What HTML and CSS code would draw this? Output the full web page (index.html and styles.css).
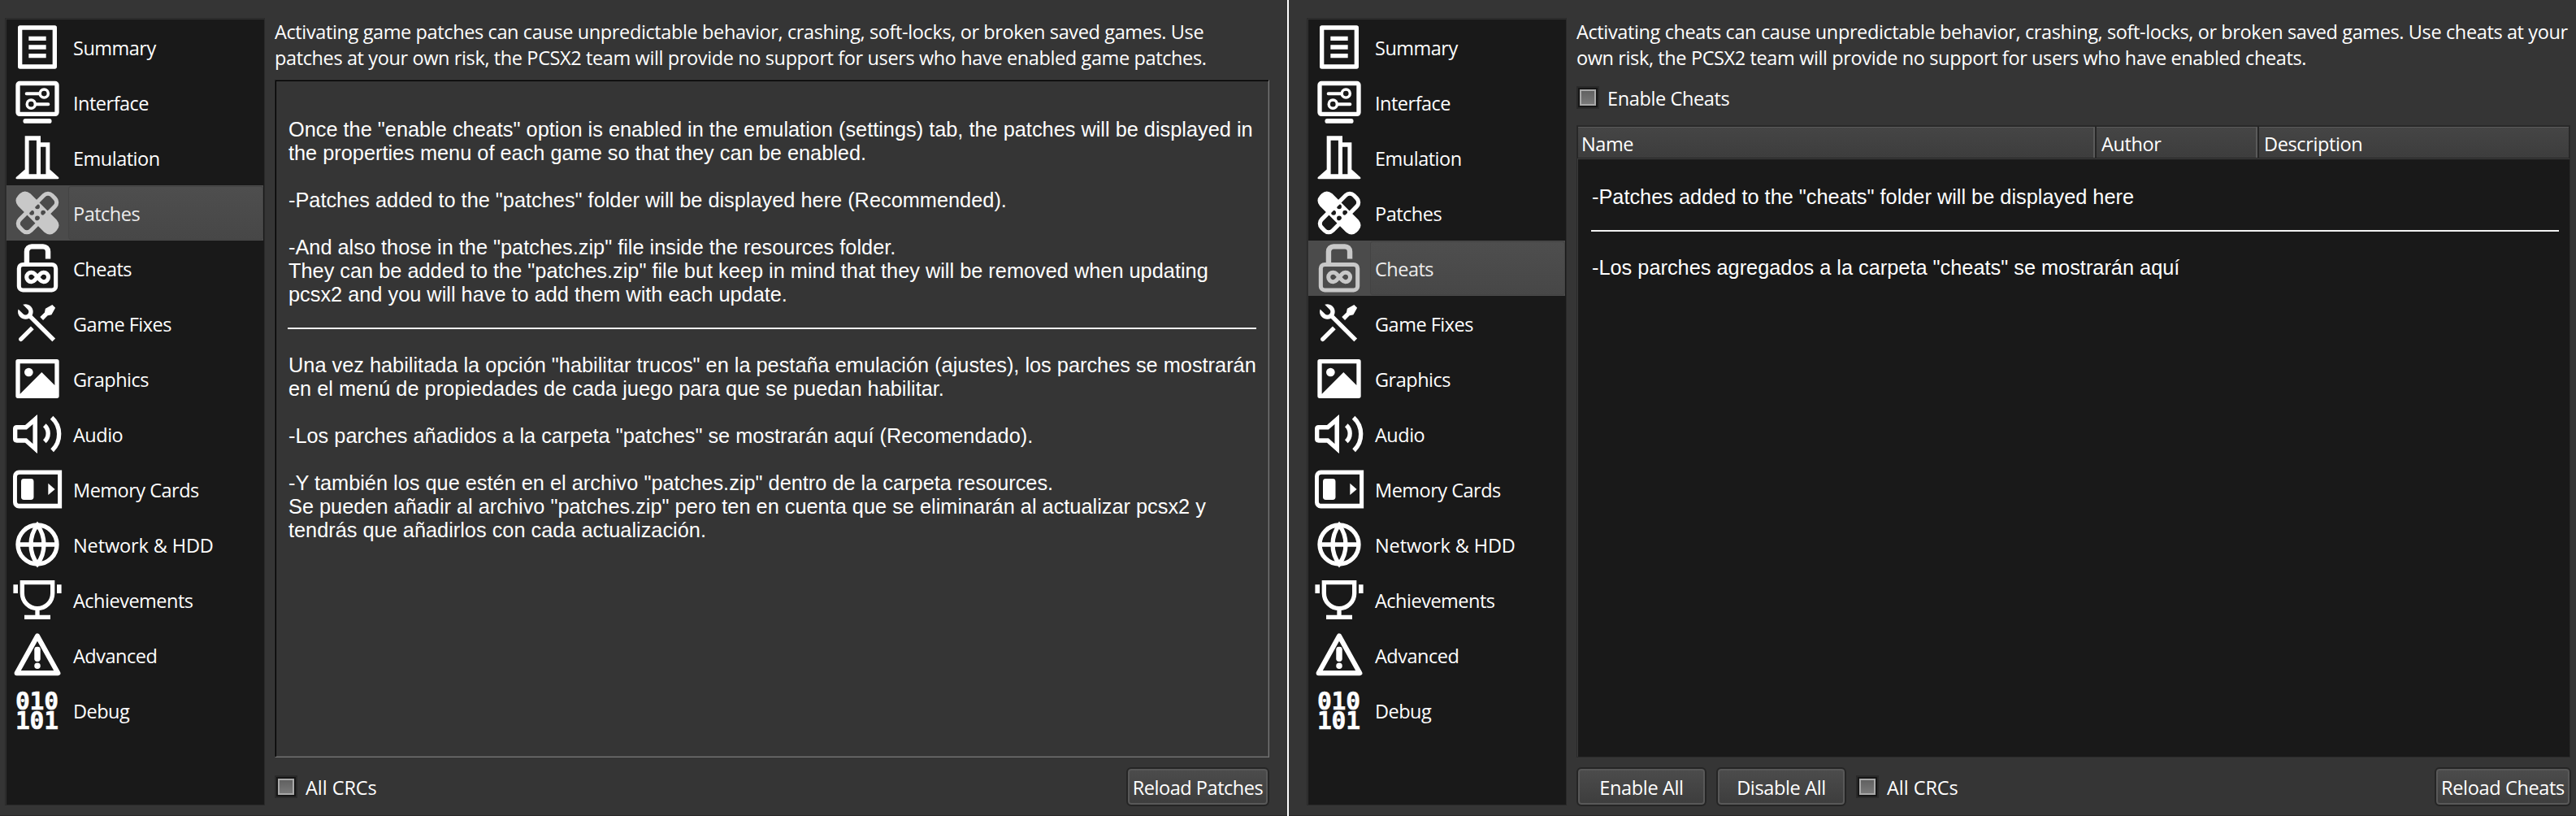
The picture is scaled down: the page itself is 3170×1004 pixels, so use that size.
FILE: index.html
```
<!DOCTYPE html>
<html lang="en">
<head>
<meta charset="utf-8">
<title>PCSX2 game properties</title>
<link rel="stylesheet" href="styles.css">
</head>
<body>
<svg class="sprite" aria-hidden="true">
  <symbol id="i-summary" viewBox="0 0 24 24"><path d="M20 22H4a1 1 0 0 1-1-1V3a1 1 0 0 1 1-1h16a1 1 0 0 1 1 1v18a1 1 0 0 1-1 1ZM19 20V4H5v16ZM8 7h8v2H8Zm0 4h8v2H8Zm0 4h8v2H8Z" fill-rule="evenodd"/></symbol>
  <symbol id="i-interface" viewBox="0 0 24 24"><g fill="none" stroke="currentColor"><rect x="3" y="3.2" width="18" height="14.2" rx=".8" stroke-width="2"/><path d="M6.5 20.6h11" stroke-width="2.2" stroke-linecap="round"/><path d="M7 8h5.8M11.4 12.8H17" stroke-width="1.5" stroke-linecap="round"/><circle cx="15.1" cy="7.9" r="1.9" stroke-width="1.3"/><circle cx="9.1" cy="12.8" r="1.9" stroke-width="1.3"/></g></symbol>
  <symbol id="i-emulation" viewBox="0 0 24 24"><path fill-rule="evenodd" d="M6.25 2h7.25v3h4.25v12.4l4 3.6q.5.8-.4.8H2.6q-.9 0-.4-.8l4.05-3.6ZM8.1 4v15.6h3.5V4Zm5.4 3v12.6h2.4V7Z"/></symbol>
  <symbol id="i-patches" viewBox="0 0 24 24"><g transform="rotate(-45 12 12)"><rect x="1.5" y="8.4" width="21" height="7.2" rx="2.6" fill="none" stroke="currentColor" stroke-width="1.9"/></g><path fill-rule="evenodd" d="M3.1 3.9 3.9 3.1Q6.2 1 8.8 3.1L20.9 15.2Q23 17.8 20.9 20.1L20.1 20.9Q17.8 23 15.2 20.9L3.1 8.8Q1 6.2 3.1 3.9ZM12 8a1.1 1.1 0 1 0 0 2.2A1.1 1.1 0 0 0 12 8ZM9.4 10.8a1.1 1.1 0 1 0 0 2.2 1.1 1.1 0 0 0 0-2.2Zm5.3 0a1.1 1.1 0 1 0 0 2.2 1.1 1.1 0 0 0 0-2.2ZM12 13.3a1.1 1.1 0 1 0 0 2.2 1.1 1.1 0 0 0 0-2.2Z"/></symbol>
  <symbol id="i-cheats" viewBox="0 0 24 24"><g fill="none" stroke="currentColor"><rect x="3.5" y="10.3" width="17" height="11.8" rx="1.8" stroke-width="1.9"/><path d="M7.1 10V4.3a2.3 2.3 0 0 1 2.3-2.3h5.2a2.3 2.3 0 0 1 2.3 2.3v3.4" stroke-width="2.4"/><path d="M12 16.1l-1.2 1.4a2.15 2.15 0 1 1 0-2.8l2.5 2.8a2.15 2.15 0 1 0 0-2.8Z" stroke-width="1.9"/></g></symbol>
  <symbol id="i-fixes" viewBox="0 0 24 24"><path d="M5.329 3.272C6.563 2.833 7.992 3.107 8.979 4.094C10.1 5.215 10.302 6.907 9.584 8.234L20.293 18.944L18.879 20.358L8.17 9.649C6.843 10.367 5.151 10.165 4.03 9.044C3.042 8.057 2.768 6.627 3.207 5.393L5.444 7.63C6.03 8.216 6.979 8.216 7.565 7.63C8.151 7.044 8.151 6.094 7.565 5.509L5.329 3.272ZM15.697 5.155L18.879 3.387L20.293 4.802L18.525 7.984L16.757 8.337L14.636 10.458L13.222 9.044L15.343 6.923L15.697 5.155ZM8.979 13.287L10.394 14.701L5.09 20.004C4.7 20.395 4.066 20.395 3.676 20.004C3.313 19.642 3.287 19.07 3.598 18.677L8.979 13.287Z"/></symbol>
  <symbol id="i-graphics" viewBox="0 0 24 24"><path fill-rule="evenodd" d="M3 3h18a1 1 0 0 1 1 1v16a1 1 0 0 1-1 1H3a1 1 0 0 1-1-1V4a1 1 0 0 1 1-1Zm17 12V5H4v14L14 9Z"/><circle cx="8" cy="9" r="2"/></symbol>
  <symbol id="i-audio" viewBox="0 0 24 24"><g fill="none" stroke="currentColor" stroke-width="2"><path d="M11 5.2 6.7 8.9H2.5q-.75 0-.75.75v4.6q0 .75.75.75H6.7l4.3 3.8Z"/><path d="M15.3 8A5.1 5.1 0 0 1 15.3 15.5M18.6 4.4A10.4 10.4 0 0 1 18.8 19.6"/></g><path d="M10 5.2 11.3 3.7q.7-.4.7.3v16q0 .7-.7.3L10 18.9Z"/></symbol>
  <symbol id="i-memory" viewBox="0 0 24 24"><path fill-rule="evenodd" d="M3.5 3.2h19.8v17.6H3.5A2.75 2.75 0 0 1 .75 18V6A2.75 2.75 0 0 1 3.5 3.2Zm.3 2q-1.2 0-1.2 1.2v11.2q0 1.1 1.2 1.1h17.6V5.2Z"/><rect x="4.5" y="7.1" width="5.8" height="9.8" rx="1.3"/><path d="M17 9.3v5.3L20.1 12Z"/></symbol>
  <symbol id="i-network" viewBox="0 0 24 24"><g fill="none" stroke="currentColor" stroke-width="2"><circle cx="12" cy="12" r="9"/><path d="M12 3A15 15 0 0 1 12 21A15 15 0 0 1 12 3ZM3 12h18"/></g></symbol>
  <symbol id="i-achievements" viewBox="0 0 24 24"><path d="M5 4h14v5a7 7 0 0 1-14 0ZM12 16v4M6 20h12" fill="none" stroke="currentColor" stroke-width="2"/><path d="M.9 5H3v4H.9ZM21 5h2.1v4H21Z"/></symbol>
  <symbol id="i-advanced" viewBox="0 0 24 24"><path d="M12 3.2 21.5 20.3h-19Z" fill="none" stroke="currentColor" stroke-width="2.3" stroke-linejoin="round"/><rect x="10.6" y="8.2" width="2.8" height="6.8" rx="1.3"/><circle cx="12" cy="17" r="1.4"/></symbol>
</svg>

<section class="window window-patches">
  <nav class="sidebar">
    <a class="item"><svg><use href="#i-summary"/></svg><span>Summary</span></a>
    <a class="item"><svg><use href="#i-interface"/></svg><span>Interface</span></a>
    <a class="item"><svg><use href="#i-emulation"/></svg><span>Emulation</span></a>
    <a class="item selected"><svg><use href="#i-patches"/></svg><span>Patches</span></a>
    <a class="item"><svg><use href="#i-cheats"/></svg><span>Cheats</span></a>
    <a class="item"><svg><use href="#i-fixes"/></svg><span>Game Fixes</span></a>
    <a class="item"><svg><use href="#i-graphics"/></svg><span>Graphics</span></a>
    <a class="item"><svg><use href="#i-audio"/></svg><span>Audio</span></a>
    <a class="item"><svg><use href="#i-memory"/></svg><span>Memory Cards</span></a>
    <a class="item"><svg><use href="#i-network"/></svg><span class="caps">Network &amp; HDD</span></a>
    <a class="item"><svg><use href="#i-achievements"/></svg><span>Achievements</span></a>
    <a class="item"><svg><use href="#i-advanced"/></svg><span>Advanced</span></a>
    <a class="item"><b class="digits">010<br>101</b><span>Debug</span></a>
  </nav>
  <main class="content">
    <p class="warning">Activating game patches can cause unpredictable behavior, crashing, soft-locks, or broken saved games. Use<br>patches at your own risk, the PCSX2 team will provide no support for users who have enabled game patches.</p>
    <div class="scroll-area notes">
      <p>Once the "enable cheats" option is enabled in the emulation (settings) tab, the patches will be displayed in<br>the properties menu of each game so that they can be enabled.</p>
      <p>-Patches added to the "patches" folder will be displayed here (Recommended).</p>
      <p class="last">-And also those in the "patches.zip" file inside the resources folder.<br>They can be added to the "patches.zip" file but keep in mind that they will be removed when updating<br>pcsx2 and you will have to add them with each update.</p>
      <hr>
      <p>Una vez habilitada la opción "habilitar trucos" en la pestaña emulación (ajustes), los parches se mostrarán<br>en el menú de propiedades de cada juego para que se puedan habilitar.</p>
      <p>-Los parches añadidos a la carpeta "patches" se mostrarán aquí (Recomendado).</p>
      <p>-Y también los que estén en el archivo "patches.zip" dentro de la carpeta resources.<br>Se pueden añadir al archivo "patches.zip" pero ten en cuenta que se eliminarán al actualizar pcsx2 y<br>tendrás que añadirlos con cada actualización.</p>
    </div>
    <footer class="actions">
      <label class="check"><i class="box"></i><span class="caps">All CRCs</span></label>
      <button class="btn reload reload-patches">Reload Patches</button>
    </footer>
  </main>
</section>

<section class="window window-cheats">
  <nav class="sidebar">
    <a class="item"><svg><use href="#i-summary"/></svg><span>Summary</span></a>
    <a class="item"><svg><use href="#i-interface"/></svg><span>Interface</span></a>
    <a class="item"><svg><use href="#i-emulation"/></svg><span>Emulation</span></a>
    <a class="item"><svg><use href="#i-patches"/></svg><span>Patches</span></a>
    <a class="item selected"><svg><use href="#i-cheats"/></svg><span>Cheats</span></a>
    <a class="item"><svg><use href="#i-fixes"/></svg><span>Game Fixes</span></a>
    <a class="item"><svg><use href="#i-graphics"/></svg><span>Graphics</span></a>
    <a class="item"><svg><use href="#i-audio"/></svg><span>Audio</span></a>
    <a class="item"><svg><use href="#i-memory"/></svg><span>Memory Cards</span></a>
    <a class="item"><svg><use href="#i-network"/></svg><span class="caps">Network &amp; HDD</span></a>
    <a class="item"><svg><use href="#i-achievements"/></svg><span>Achievements</span></a>
    <a class="item"><svg><use href="#i-advanced"/></svg><span>Advanced</span></a>
    <a class="item"><b class="digits">010<br>101</b><span>Debug</span></a>
  </nav>
  <main class="content">
    <p class="warning">Activating cheats can cause unpredictable behavior, crashing, soft-locks, or broken saved games. Use cheats at your<br>own risk, the PCSX2 team will provide no support for users who have enabled cheats.</p>
    <label class="check enable"><i class="box"></i><span>Enable Cheats</span></label>
    <div class="tree">
      <div class="tree-head"><span>Name</span><span>Author</span><span>Description</span></div>
      <div class="tree-body notes">
        <p class="last">-Patches added to the "cheats" folder will be displayed here</p>
        <hr>
        <p>-Los parches agregados a la carpeta "cheats" se mostrarán aquí</p>
      </div>
    </div>
    <footer class="actions">
      <button class="btn enable-all">Enable All</button>
      <button class="btn disable-all">Disable All</button>
      <label class="check"><i class="box"></i><span class="caps">All CRCs</span></label>
      <button class="btn reload reload-cheats">Reload Cheats</button>
    </footer>
  </main>
</section>
</body>
</html>
```
FILE: styles.css
```
* { box-sizing: border-box; }

body {
  margin: 0;
  height: 1004px;
  display: flex;
  gap: 2px;
  overflow: hidden;
  background: #fff;
  color: #fff;
  font: 23.5px/32px "Open Sans", "Noto Sans", sans-serif;
  letter-spacing: -0.38px;
  white-space: nowrap;
}

p { margin: 0; }
.sprite { position: absolute; width: 0; height: 0; }

.window {
  width: 1584px;
  display: flex;
  gap: 12px;
  background: #353535;
  border-bottom: 1px solid #2a2829;
}
.window-patches { padding: 22px 22px 11px 6px; }
.window-cheats { padding: 22px 7px 11px 22px; }

/* Sidebar */
.sidebar {
  flex: none;
  width: 320px;
  height: 969px;
  border: 1px solid #2a2a2a;
  padding: 1px 0 0 1px;
  background: #191919;
  box-shadow: inset 1px 1px 0 #313131;
}
.item {
  display: flex;
  align-items: center;
  height: 68px;
  width: 316px;
  padding-left: 6px;
}
.item svg {
  flex: none;
  width: 64px;
  height: 64px;
  fill: currentColor;
}
.item span {
  flex: 1;
  height: 66px;
  margin-left: 6px;
  padding: 17px 0 0 5px;
  border: 1px solid transparent;
  border-radius: 3px;
  letter-spacing: -0.5px;
}
.item .caps { letter-spacing: -0.12px; }
.selected { background: #4b4b4b; color: #c8c8c8; }
.selected span {
  border-color: #434343;
  background: linear-gradient(#4e4e4e, #474747);
  color: #ececec;
}
.digits {
  flex: none;
  width: 64px;
  height: 64px;
  padding: 9px 0 0 5px;
  font: bold 29.6px/24px "DejaVu Sans Mono", monospace;
  letter-spacing: -0.2px;
  -webkit-text-stroke: 0.5px currentColor;
}
.caps { letter-spacing: -0.05px; }

/* Main column */
.content {
  flex: 1;
  min-width: 0;
  display: flex;
  flex-direction: column;
}
.warning { height: 64px; padding-top: 1px; }

.notes {
  font: 25.33px/29px "Liberation Sans", Arial, sans-serif;
  letter-spacing: 0;
}
.notes p { margin-bottom: 29px; }
.notes .last { margin-bottom: 0; }
.notes hr {
  height: 28px;
  margin: 0 0 30px -1px;
  border: 0;
  border-bottom: 2px solid #f2f2f2;
}
.scroll-area {
  height: 834px;
  margin-top: 12px;
  padding: 46px 15px 0 16px;
  border: 1px solid;
  border-color: #222 #777 #777 #222;
  box-shadow: inset 1px 1px 0 #000, inset -1px -1px 0 #4c4c4c;
}

/* Checkboxes */
.check { display: flex; align-items: center; }
.check span { margin-left: 10px; padding-top: 2px; }
.box {
  width: 28px;
  height: 28px;
  border: 2px solid #2a2a2a;
  background: linear-gradient(#5e5e5e, #7c7c7c) content-box, #161616;
  padding: 2px;
  position: relative;
}
.box::after {
  content: "";
  position: absolute;
  inset: 2px;
  border: 2px solid #a9a9a9;
}
.enable { margin-top: 18px; height: 32px; }

/* Cheat list */
.tree {
  height: 778px;
  margin-top: 18px;
  border: 1px solid #2a2a2a;
  background: #191919;
  box-shadow: inset 1px 0 0 #3a3a3a;
}
.tree-head {
  display: grid;
  grid-template-columns: 638px 200px 1fr;
  height: 41px;
  padding: 1px 1px 0;
  border-bottom: 1px solid #404040;
  background: #262626;
}
.tree-head span {
  height: 38px;
  margin-right: 2px;
  padding: 4px 0 0 6px;
  background: linear-gradient(#454545, #3d3d3d);
  border-top: 1px solid #5a5a5a;
  border-right: 2px solid #5a5a5a;
}
.tree-head span:first-child { padding-left: 4px; }
.tree-head span:last-child { border-right: 0; margin-right: 0; }
.tree-body { padding: 32px 13px 0 18px; }

/* Footer */
.actions {
  display: flex;
  align-items: flex-start;
  height: 48px;
  margin-top: 12px;
}
.actions .check { height: 48px; }
.btn {
  height: 48px;
  padding: 1px 0 0;
  border: 2px solid #252525;
  border-radius: 6px;
  background: linear-gradient(#4c4c4c, #3d3d3d);
  box-shadow: inset 0 0 0 2px #585858;
  color: #fff;
  font: inherit;
  letter-spacing: -0.35px;
}
.reload { margin-left: auto; }
.reload-patches { width: 176px; letter-spacing: -0.45px; }
.reload-cheats { width: 168px; margin-right: -1px; }
.enable-all { width: 160px; margin-right: 12px; }
.disable-all { width: 160px; margin-right: 12px; }
```
